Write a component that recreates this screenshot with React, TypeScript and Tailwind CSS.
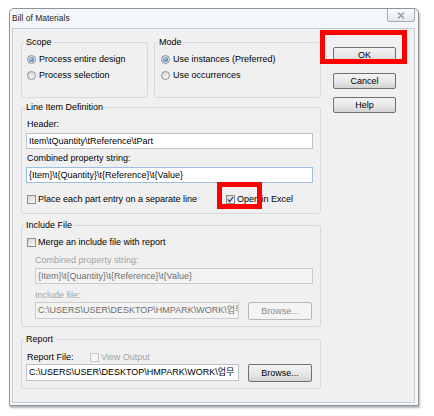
import React, { ReactNode } from 'react';

// Bill of Materials dialog (Win7 basic theme look)

const Radio = ({ checked }: { checked?: boolean }) => (
  <span className="flex h-[9px] w-[9px] shrink-0 items-center justify-center rounded-full border border-[#8e8f8f] bg-linear-to-br from-[#d4d4d4] to-[#fbfbfb]">
    {checked && (
      <span className="h-[5px] w-[5px] rounded-full bg-[radial-gradient(circle_at_35%_35%,#a8d4ff,#1d5cb0)]" />
    )}
  </span>
);

const Check = ({ checked, disabled }: { checked?: boolean; disabled?: boolean }) => (
  <span
    className={`flex h-[9px] w-[9px] shrink-0 items-center justify-center border ${
      disabled
        ? 'border-[#c8c8c8] bg-[#f6f6f6]'
        : 'border-[#8e8f8f] bg-linear-to-br from-[#d6d6d6] to-[#f9f9f9]'
    }`}
  >
    {checked && (
      <svg width="7" height="7" viewBox="0 0 7 7">
        <path d="M0.8 3.6 L2.7 5.6 L6.2 0.8" fill="none" stroke="#2f4f9a" strokeWidth="1.4" />
      </svg>
    )}
  </span>
);

const Field = ({
  value,
  className = '',
  disabled,
  focused,
}: {
  value: string;
  className?: string;
  disabled?: boolean;
  focused?: boolean;
}) => (
  <div
    className={`flex items-center overflow-hidden whitespace-nowrap border pl-[2px] ${
      disabled
        ? 'border-[#c9ccd0] bg-[#f3f3f3] text-[#6f6f6f]'
        : focused
          ? 'border-[#9cbfe3] bg-white text-black'
          : 'border-[#bcc3cc] bg-white text-black'
    } ${className}`}
  >
    {value}
  </div>
);

const Btn = ({ label, disabled, className = '' }: { label: string; disabled?: boolean; className?: string }) => (
  <div
    className={`flex items-center justify-center rounded-[2px] border ${
      disabled
        ? 'border-[#b5b9bd] bg-[#f4f4f4] text-[#8a8a8a]'
        : 'border-[#707070] bg-linear-to-b from-[#f3f3f3] via-[#e9e9e9] to-[#d3d3d3] text-black'
    } ${className}`}
  >
    {label}
  </div>
);

const Group = ({ title, className = '', children }: { title: string; className?: string; children: ReactNode }) => (
  <fieldset className={`min-w-0 rounded-[3px] border border-[#d3dbe2] ${className}`}>
    <legend className="ml-[2px] px-[2px] leading-[11px]">{title}</legend>
    {children}
  </fieldset>
);

export default function App() {
  return (
    <div className="relative h-[416px] w-[434px] overflow-hidden bg-white font-['Liberation_Sans',Arial,sans-serif] text-[9px] leading-[11px] text-black">
      <div className="pt-[8px]">
        {/* window frame */}
        <div className="ml-[9px] h-[398px] w-[410px] rounded-t-[5px] border border-[#8d949c] bg-[#f4f7fa] shadow-[1px_2px_2px_rgba(0,0,0,0.3)]">
          <div className="flex h-[19px] items-start justify-between">
            <span className="pl-[2px] pt-[4px] text-[8.5px] text-[#1e1e1e]">Bill of Materials</span>
            <div className="mr-[3px] flex h-[13px] w-[28px] items-center justify-center rounded-b-[3px] border border-t-0 border-[#a3abb4] bg-linear-to-b from-[#fdfdfd] to-[#e3e8ee]">
              <svg width="8" height="7" viewBox="0 0 8 7">
                <path d="M1 0.5 L7 6.5 M7 0.5 L1 6.5" stroke="#8b939c" strokeWidth="1.2" />
              </svg>
            </div>
          </div>

          {/* client area */}
          <div className="ml-[2px] flex h-[375px] w-[403px] items-start gap-[12px] border border-[#c7ccd2] bg-[#f0f0f0] pl-[8px] pt-[8px]">
            <div className="flex w-[300px] flex-col">
              <div className="flex gap-[6px]">
                <Group title="Scope" className="w-[127px] pb-[15px]">
                  <div className="flex flex-col gap-[2px] pl-[5px] pt-[4px]">
                    <div className="flex h-[14px] items-center gap-[3px]">
                      <Radio checked />
                      <span>Process entire design</span>
                    </div>
                    <div className="flex h-[14px] items-center gap-[3px]">
                      <Radio />
                      <span>Process selection</span>
                    </div>
                  </div>
                </Group>
                <Group title="Mode" className="w-[167px] pb-[15px]">
                  <div className="flex flex-col gap-[2px] pl-[6px] pt-[4px]">
                    <div className="flex h-[14px] items-center gap-[3px]">
                      <Radio checked />
                      <span>Use instances (Preferred)</span>
                    </div>
                    <div className="flex h-[14px] items-center gap-[3px]">
                      <Radio />
                      <span>Use occurrences</span>
                    </div>
                  </div>
                </Group>
              </div>

              <Group title="Line Item Definition" className="mt-[4px] pb-[7px]">
                <div className="flex flex-col pl-[4px] pt-[6px]">
                  <span className="pl-[1px]">Header:</span>
                  <Field value="Item\tQuantity\tReference\tPart" className="mt-[3px] h-[16px] w-[287px]" />
                  <span className="mt-[4px] pl-[1px]">Combined property string:</span>
                  <Field
                    value="{Item}\t{Quantity}\t{Reference}\t{Value}"
                    focused
                    className="mt-[3px] h-[16px] w-[287px]"
                  />
                  <div className="mt-[10px] flex h-[13px] items-center pl-[1px]">
                    <div className="flex w-[199px] items-center gap-[2px]">
                      <Check />
                      <span>Place each part entry on a separate line</span>
                    </div>
                    <div className="flex items-center gap-[2px]">
                      <Check checked />
                      <span>Open in Excel</span>
                    </div>
                  </div>
                </div>
              </Group>

              <Group title="Include File" className="mt-[6px] pb-[6px]">
                <div className="flex flex-col pt-[5px]">
                  <div className="flex h-[13px] items-center gap-[2px] pl-[5px]">
                    <Check />
                    <span>Merge an include file with report</span>
                  </div>
                  <div className="flex flex-col pl-[13px]">
                    <span className="mt-[6px] text-[#a3a3a3]">Combined property string:</span>
                    <Field
                      value="{Item}\t{Quantity}\t{Reference}\t{Value}"
                      disabled
                      className="mt-[2px] h-[16px] w-[278px]"
                    />
                    <span className="mt-[6px] text-[#a3a3a3]">Include file:</span>
                    <div className="mt-[1px] flex items-start gap-[9px]">
                      <Field
                        value="C:\USERS\USER\DESKTOP\HMPARK\WORK\업무"
                        disabled
                        className="h-[17px] w-[204px] font-['Liberation_Sans','Noto_Sans_CJK_KR',sans-serif]"
                      />
                      <Btn label="Browse..." disabled className="h-[18px] w-[64px]" />
                    </div>
                  </div>
                </div>
              </Group>

              <Group title="Report" className="mt-[7px] pb-[6px]">
                <div className="flex flex-col pl-[4px] pt-[7px]">
                  <div className="flex items-center">
                    <span className="w-[64px] pl-[1px]">Report File:</span>
                    <div className="flex items-center gap-[2px] text-[#a3a3a3]">
                      <Check disabled />
                      <span>View Output</span>
                    </div>
                  </div>
                  <div className="mt-[1px] flex items-start gap-[9px]">
                    <Field
                      value="C:\USERS\USER\DESKTOP\HMPARK\WORK\업무"
                      className="h-[17px] w-[213px] font-['Liberation_Sans','Noto_Sans_CJK_KR',sans-serif]"
                    />
                    <Btn label="Browse..." className="h-[18px] w-[64px]" />
                  </div>
                </div>
              </Group>
            </div>

            <div className="flex w-[63px] flex-col pt-[10px]">
              <Btn label="OK" className="h-[16px]" />
              <Btn label="Cancel" className="mt-[10px] h-[16px]" />
              <Btn label="Help" className="mt-[8px] h-[16px]" />
            </div>
          </div>
        </div>
      </div>

      {/* red annotation boxes */}
      <div className="absolute left-[320px] top-[30px] h-[34px] w-[87px] border-[5px] border-[#ff0000]" />
      <div className="absolute left-[217px] top-[182px] h-[27px] w-[45px] border-[5px] border-[#ff0000]" />
    </div>
  );
}
